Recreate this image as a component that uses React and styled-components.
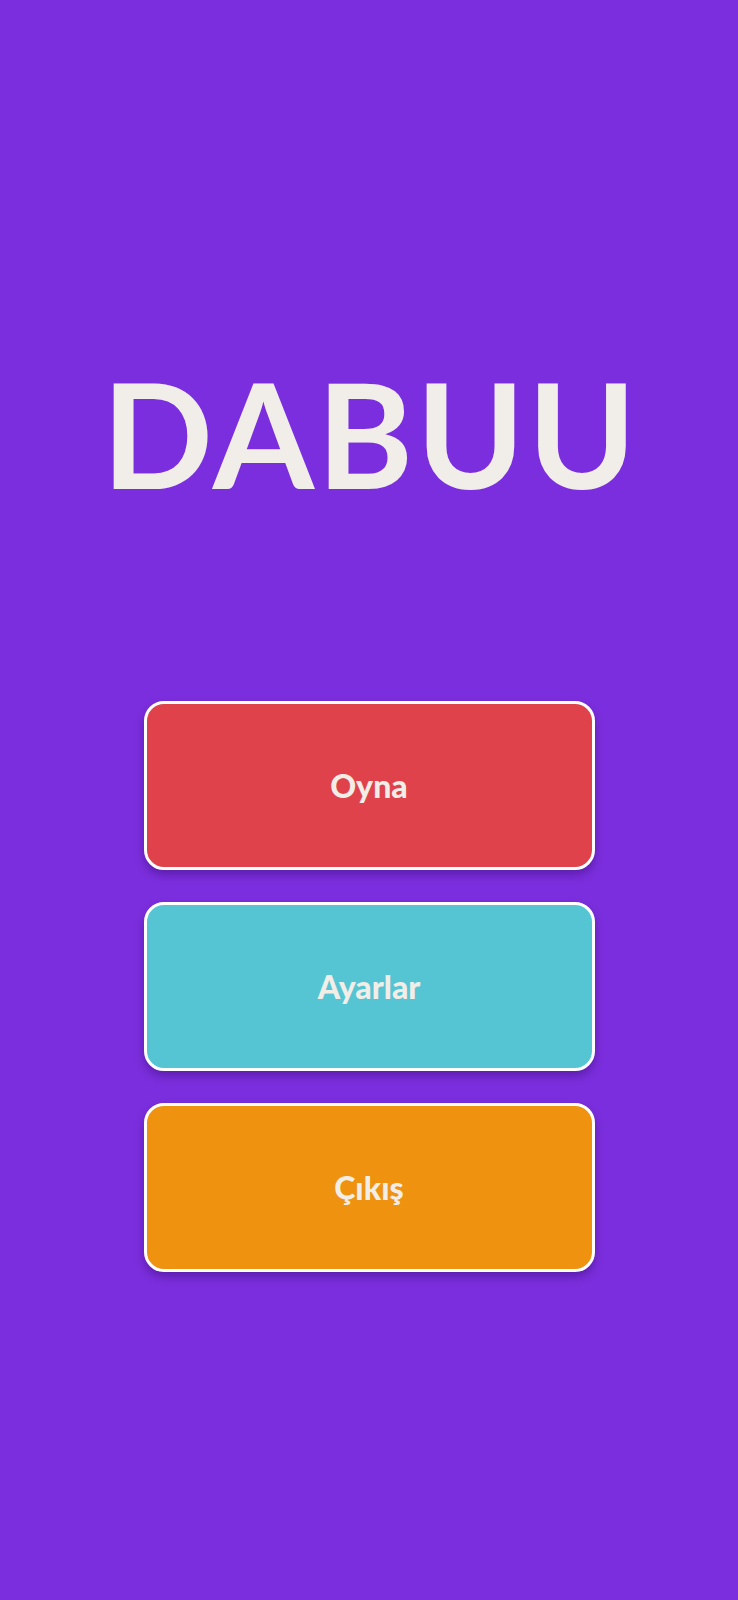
import React from 'react'
import styled, {createGlobalStyle} from 'styled-components'

const GlobalStyle = createGlobalStyle`
    html, body {
        margin: 0;
        padding: 0;
        background: #7b2edd;
    }
`

const Screen = styled.div`
    min-height: 1600px;
    display: flex;
    flex-direction: column;
    align-items: center;
    font-family: Lato, "Open Sans", sans-serif;
`

const Title = styled.h1`
    margin: 360px 0 0;
    padding-left: 3px;
    font-size: 146px;
    line-height: 1;
    font-weight: 700;
    color: #f1eeea;
    letter-spacing: 3px;
`

const Menu = styled.div`
    margin-top: 195px;
    display: flex;
    flex-direction: column;
    gap: 32px;
`

const MenuButton = styled.button`
    width: 451px;
    height: 169px;
    box-sizing: border-box;
    border: 3px solid #ffffff;
    border-radius: 20px;
    background: ${p => p.color};
    color: #f3ede8;
    font-family: Lato, sans-serif;
    font-weight: 900;
    font-size: 32px;
    box-shadow: 0 5px 8px rgba(40, 0, 90, 0.35);
    cursor: pointer;
`

const App = () => {
    return (
        <Screen>
            <GlobalStyle/>
            <Title>DABUU</Title>
            <Menu>
                <MenuButton color="#e0424b">Oyna</MenuButton>
                <MenuButton color="#55c5d3">Ayarlar</MenuButton>
                <MenuButton color="#ee9210">Çıkış</MenuButton>
            </Menu>
        </Screen>
    )
}

export default App
